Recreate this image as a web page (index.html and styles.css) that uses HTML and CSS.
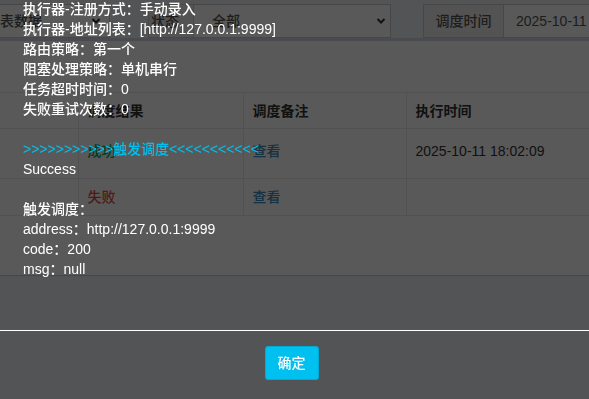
FILE: index.html
```html
<!DOCTYPE html>
<html lang="zh-CN">
<head>
<meta charset="utf-8">
<title>调度日志</title>
<link rel="stylesheet" href="styles.css">
</head>
<body>
<div class="page">
  <div class="filters">
    <div class="field sel sel-first"><span>表数据</span><svg class="chev" width="10" height="8" viewBox="0 0 10 8"><polyline points="1.5,2 5,5.5 8.5,2" fill="none" stroke="#333" stroke-width="2"/></svg></div>
    <div class="group group-status">
      <div class="addon addon-status">状态</div>
      <div class="field sel sel-status"><span>全部</span><svg class="chev" width="10" height="8" viewBox="0 0 10 8"><polyline points="1.5,2 5,5.5 8.5,2" fill="none" stroke="#333" stroke-width="2"/></svg></div>
    </div>
    <div class="group group-time">
      <div class="addon addon-time">调度时间</div>
      <div class="field input-time">2025-10-11</div>
    </div>
  </div>
  <div class="box">
    <table class="grid">
      <colgroup><col class="c0"><col class="c1"><col class="c2"><col class="c3"></colgroup>
      <thead>
        <tr class="head"><th></th><th>调度结果</th><th>调度备注</th><th>执行时间</th></tr>
      </thead>
      <tbody>
        <tr class="r1"><td></td><td><span class="ok">成功</span></td><td><span class="link">查看</span></td><td>2025-10-11 18:02:09</td></tr>
        <tr class="r2"><td></td><td><span class="fail">失败</span></td><td><span class="link">查看</span></td><td></td></tr>
      </tbody>
    </table>
  </div>
</div>

<div class="shade"></div>

<div class="modal">
  <div class="modal-body">
    <div>执行器-注册方式：手动录入</div>
    <div>执行器-地址列表：[http://127.0.0.1:9999]</div>
    <div>路由策略：第一个</div>
    <div>阻塞处理策略：单机串行</div>
    <div>任务超时时间：0</div>
    <div>失败重试次数：0</div>
    <div class="blank"></div>
    <div class="trigger">&gt;&gt;&gt;&gt;&gt;&gt;&gt;&gt;&gt;&gt;&gt;触发调度&lt;&lt;&lt;&lt;&lt;&lt;&lt;&lt;&lt;&lt;&lt;</div>
    <div>Success</div>
    <div class="blank"></div>
    <div>触发调度：</div>
    <div>address：http://127.0.0.1:9999</div>
    <div>code：200</div>
    <div>msg：null</div>
  </div>
  <div class="modal-footer">
    <button class="btn-ok" type="button">确定</button>
  </div>
</div>
</body>
</html>
```

FILE: styles.css
```css
* { box-sizing: border-box; }
html, body { margin: 0; padding: 0; height: 100%; overflow: hidden; }
body {
  background: #ecf0f5;
  font-family: "Liberation Sans", "Noto Sans CJK SC", sans-serif;
  font-size: 14px;
  font-weight: 500;
  line-height: 20px;
  color: #333;
}

.page { width: 100%; }

.filters {
  display: flex;
  align-items: flex-start;
  padding-top: 4px;
  height: 38px;
  white-space: nowrap;
  overflow: hidden;
}
.filters > * { flex: none; }
.field {
  height: 34px;
  background: #fff;
  border: 1px solid #ccc;
  color: #555;
  display: flex;
  align-items: center;
  overflow: hidden;
}
.sel { justify-content: space-between; }
.chev { display: block; flex: none; }
.sel-first {
  width: 110px;
  padding: 0 8px 0 0;
  border-left: none;
}
.group { display: flex; }
.group > * { flex: none; }
.group-status { margin-left: 38px; }
.addon {
  height: 34px;
  background: #eee;
  border: 1px solid #ccc;
  color: #555;
  display: flex;
  align-items: center;
  justify-content: center;
}
.addon-status { width: 45px; border-right: none; justify-content: flex-start; padding-left: 2px; }
.sel-status { width: 198px; padding: 0 4px 0 18px; }
.group-time { margin-left: 32px; flex: 1; min-width: 0; }
.addon-time { width: 80px; border-right: none; }
.input-time { width: 100px; padding-left: 12px; border-right: none; }

.box {
  background: #fff;
  border-top: 3px solid #d2d6de;
  padding-top: 51px;
  height: 237px;
  box-shadow: 0 1px 1px rgba(0, 0, 0, 0.15);
}
.grid {
  border-collapse: collapse;
  table-layout: fixed;
  width: 100%;
}
.c0 { width: 78px; }
.c1 { width: 165px; }
.c2 { width: 163px; }
.grid th, .grid td {
  border: 1px solid #e8e8e8;
  text-align: left;
  padding: 0 9px;
  vertical-align: top;
  white-space: nowrap;
}
.grid th:first-child, .grid td:first-child { border-left: none; }
.grid th:last-child, .grid td:last-child { border-right: none; }
.grid th { font-weight: bold; color: #333; }
.head th { height: 36px; padding-top: 8px; }
.r1 td { height: 50px; padding-top: 12px; }
.r2 td { height: 37px; padding-top: 8px; }
.ok { color: #00a65a; }
.fail { color: #dd4b39; }
.link { color: #3c8dbc; }

.shade {
  position: fixed;
  inset: 0;
  background: rgba(0, 0, 0, 0.65);
}

.modal {
  position: fixed;
  inset: 0;
  color: #fff;
}
.modal-body {
  margin-top: -1px;
  height: 331px;
  padding-left: 23px;
}
.modal-body .blank { height: 20px; }
.trigger { color: #00c0ef; }
.modal-footer {
  border-top: 1px solid #fff;
  padding: 15px 6px 15px 0;
  display: flex;
  justify-content: center;
}
.btn-ok {
  width: 54px;
  height: 34px;
  background: #00c0ef;
  border: 1px solid #00acd6;
  border-radius: 3px;
  color: #fff;
  font-family: "Liberation Sans", "Noto Sans CJK SC", sans-serif;
  font-size: 14px;
  font-weight: 500;
  line-height: 20px;
  padding: 0;
}
```
